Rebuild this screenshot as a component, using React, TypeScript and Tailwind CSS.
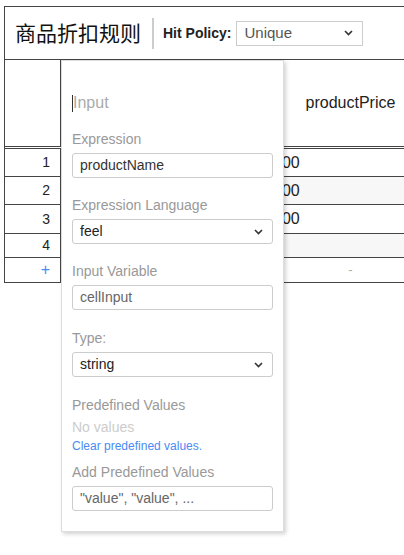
import React from 'react';

const FONT = { fontFamily: "'Liberation Sans', 'Noto Sans CJK SC', Arial, sans-serif" };

function Chevron() {
  return (
    <svg width="9" height="6" viewBox="0 0 9 6" className="shrink-0">
      <polyline points="1,1 4.5,4.5 8,1" fill="none" stroke="#333" strokeWidth="1.6" />
    </svg>
  );
}

function Label({ text, className = '' }: { text: string; className?: string }) {
  return <div className={`h-[18px] leading-[18px] text-[14px] text-[#999] ${className}`}>{text}</div>;
}

function Field({ value, muted = false }: { value: string; muted?: boolean }) {
  return (
    <div
      className={`mt-[5px] h-[25px] flex items-center px-[7px] border border-[#ccc] rounded-[3px] text-[14px] ${
        muted ? 'text-[#666]' : 'text-[#333]'
      }`}
    >
      {value}
    </div>
  );
}

function Select({ value }: { value: string }) {
  return (
    <div className="mt-[5px] h-[25px] flex items-center justify-between pl-[7px] pr-[9px] border border-[#ccc] rounded-[3px] text-[14px] text-[#222]">
      <span>{value}</span>
      <Chevron />
    </div>
  );
}

const rows = [
  { id: 1, value: '100', h: 'h-[28px]', bg: 'bg-white' },
  { id: 2, value: '200', h: 'h-[28px]', bg: 'bg-[#f7f7f7]' },
  { id: 3, value: '300', h: 'h-[29px]', bg: 'bg-white' },
  { id: 4, value: '', h: 'h-[24px]', bg: 'bg-[#f7f7f7]' },
];

export default function App() {
  return (
    <div className="w-[404px] h-[555px] overflow-hidden bg-white" style={FONT}>
      <div className="ml-[4px] mt-[6px] w-[440px] border-l border-t border-[#444]">
        {/* Header */}
        <div className="h-[53px] flex items-center border-b border-[#444] pl-[10px]">
          <span className="text-[21px] text-[#111] leading-none">商品折扣规则</span>
          <div className="ml-[11px] w-[2px] h-[31px] bg-[#ccc]" />
          <span className="ml-[9px] text-[14px] font-bold text-[#222]">Hit Policy:</span>
          <div className="ml-[5px] w-[127px] h-[25px] flex items-center justify-between pl-[7px] pr-[9px] border border-[#ccc] text-[15px] text-[#555]">
            <span>Unique</span>
            <Chevron />
          </div>
        </div>

        {/* Table */}
        <div className="relative">
          <div className="h-[89px] flex border-b-[3px] border-double border-[#444]">
            <div className="w-[56px] border-r border-[#444]" />
            <div className="w-[204px] border-r border-[#444]" />
            <div className="flex-1 flex items-center justify-center pr-[8px] text-[16px] text-[#222]">
              productPrice
            </div>
          </div>

          {rows.map((r) => (
            <div key={r.id} className={`${r.h} flex border-b border-[#444]`}>
              <div className="w-[56px] border-r border-[#444] flex items-center justify-end pr-[10px] text-[14px] text-[#222] bg-white">
                {r.id}
              </div>
              <div className={`w-[204px] ${r.bg}`} />
              <div className={`flex-1 flex items-center pl-[8px] text-[16px] text-[#222] ${r.bg}`}>{r.value}</div>
            </div>
          ))}

          <div className="h-[25px] flex border-b border-[#444]">
            <div className="w-[56px] border-r border-[#444] flex items-center justify-end pr-[10px] text-[16px] text-[#4a8af4]">
              +
            </div>
            <div className="w-[204px]" />
            <div className="flex-1 flex items-center justify-center pr-[8px] text-[13px] text-[#aaa]">-</div>
          </div>

          {/* Popup editor */}
          <div className="absolute left-[56px] top-0 w-[223px] h-[472px] bg-white border border-[#ddd] shadow-[2px_2px_4px_rgba(0,0,0,0.18)] px-[10px] pt-[32px]">
            <div className="h-[20px] flex items-center text-[16px] text-[#aaa]">
              <span className="w-px h-[17px] bg-[#333]" />
              <span>Input</span>
            </div>

            <Label text="Expression" className="mt-[17px]" />
            <Field value="productName" />

            <Label text="Expression Language" className="mt-[18px]" />
            <Select value="feel" />

            <Label text="Input Variable" className="mt-[18px]" />
            <Field value="cellInput" muted />

            <Label text="Type:" className="mt-[19px]" />
            <Select value="string" />

            <Label text="Predefined Values" className="mt-[19px]" />
            <div className="mt-[4px] h-[18px] leading-[18px] text-[14px] text-[#ccc]">No values</div>
            <div className="mt-[2px] h-[16px] leading-[16px] text-[12px] text-[#4a8af4]">Clear predefined values.</div>

            <Label text="Add Predefined Values" className="mt-[9px] text-[#888]" />
            <Field value={'"value", "value", ...'} muted />
          </div>
        </div>
      </div>
    </div>
  );
}
